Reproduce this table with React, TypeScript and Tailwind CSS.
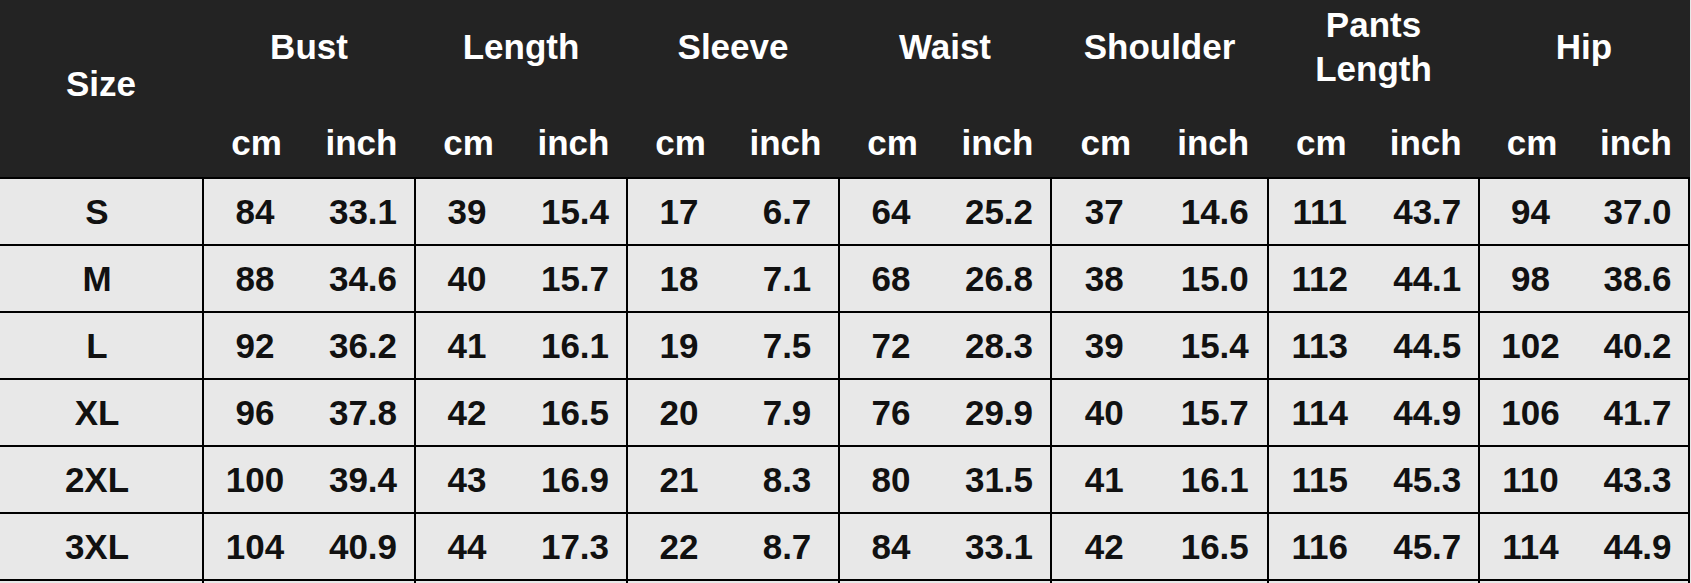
import React from "react";

type Group = { title: string[]; w: string };

const groups: Group[] = [
  { title: ["Bust"], w: "w-[212px]" },
  { title: ["Length"], w: "w-[212px]" },
  { title: ["Sleeve"], w: "w-[212px]" },
  { title: ["Waist"], w: "w-[212px]" },
  { title: ["Shoulder"], w: "w-[217px]" },
  { title: ["Pants", "Length"], w: "w-[211px]" },
  { title: ["Hip"], w: "w-[210px]" },
];

const rows: { size: string; vals: [string, string][] }[] = [
  { size: "S", vals: [["84", "33.1"], ["39", "15.4"], ["17", "6.7"], ["64", "25.2"], ["37", "14.6"], ["111", "43.7"], ["94", "37.0"]] },
  { size: "M", vals: [["88", "34.6"], ["40", "15.7"], ["18", "7.1"], ["68", "26.8"], ["38", "15.0"], ["112", "44.1"], ["98", "38.6"]] },
  { size: "L", vals: [["92", "36.2"], ["41", "16.1"], ["19", "7.5"], ["72", "28.3"], ["39", "15.4"], ["113", "44.5"], ["102", "40.2"]] },
  { size: "XL", vals: [["96", "37.8"], ["42", "16.5"], ["20", "7.9"], ["76", "29.9"], ["40", "15.7"], ["114", "44.9"], ["106", "41.7"]] },
  { size: "2XL", vals: [["100", "39.4"], ["43", "16.9"], ["21", "8.3"], ["80", "31.5"], ["41", "16.1"], ["115", "45.3"], ["110", "43.3"]] },
  { size: "3XL", vals: [["104", "40.9"], ["44", "17.3"], ["22", "8.7"], ["84", "33.1"], ["42", "16.5"], ["116", "45.7"], ["114", "44.9"]] },
];

export default function App() {
  return (
    <div className="w-[1691px] h-[583px] overflow-hidden bg-[#e8e8e8] font-['Liberation_Sans',Arial,sans-serif] font-bold text-[35px] leading-none">
      {/* header */}
      <div className="flex h-[177px] w-[1690px] bg-[#232323] text-white">
        <div className="w-[204px] shrink-0 border-r-2 border-transparent flex items-center justify-center pb-[10px]">
          Size
        </div>
        {groups.map((g, i) => (
          <div key={i} className={`${g.w} shrink-0 border-r-2 border-transparent flex flex-col`}>
            <div className="h-[94px] flex flex-col items-center justify-center leading-[44px]">
              {g.title.map((t) => (
                <span key={t}>{t}</span>
              ))}
            </div>
            <div className="h-[83px] flex pt-[13px]">
              <div className="flex-1 flex items-center justify-center">cm</div>
              <div className="flex-1 flex items-center justify-center">inch</div>
            </div>
          </div>
        ))}
      </div>
      {/* body */}
      <div className="w-[1690px] text-[#111111]">
        {rows.map((r) => (
          <div key={r.size} className="flex h-[67px] border-t-2 border-black">
            <div className="w-[204px] shrink-0 border-r-2 border-black flex items-center justify-center pr-[8px]">
              {r.size}
            </div>
            {r.vals.map((v, i) => (
              <div key={i} className={`${groups[i].w} shrink-0 border-r-2 border-black flex`}>
                <div className="flex-1 flex items-center justify-center pr-[6px]">{v[0]}</div>
                <div className="flex-1 flex items-center justify-center">{v[1]}</div>
              </div>
            ))}
          </div>
        ))}
        <div className="flex h-[4px] border-t-2 border-black">
          <div className="w-[204px] shrink-0 border-r-2 border-black" />
          {groups.map((g, i) => (
            <div key={i} className={`${g.w} shrink-0 border-r-2 border-black`} />
          ))}
        </div>
      </div>
    </div>
  );
}
